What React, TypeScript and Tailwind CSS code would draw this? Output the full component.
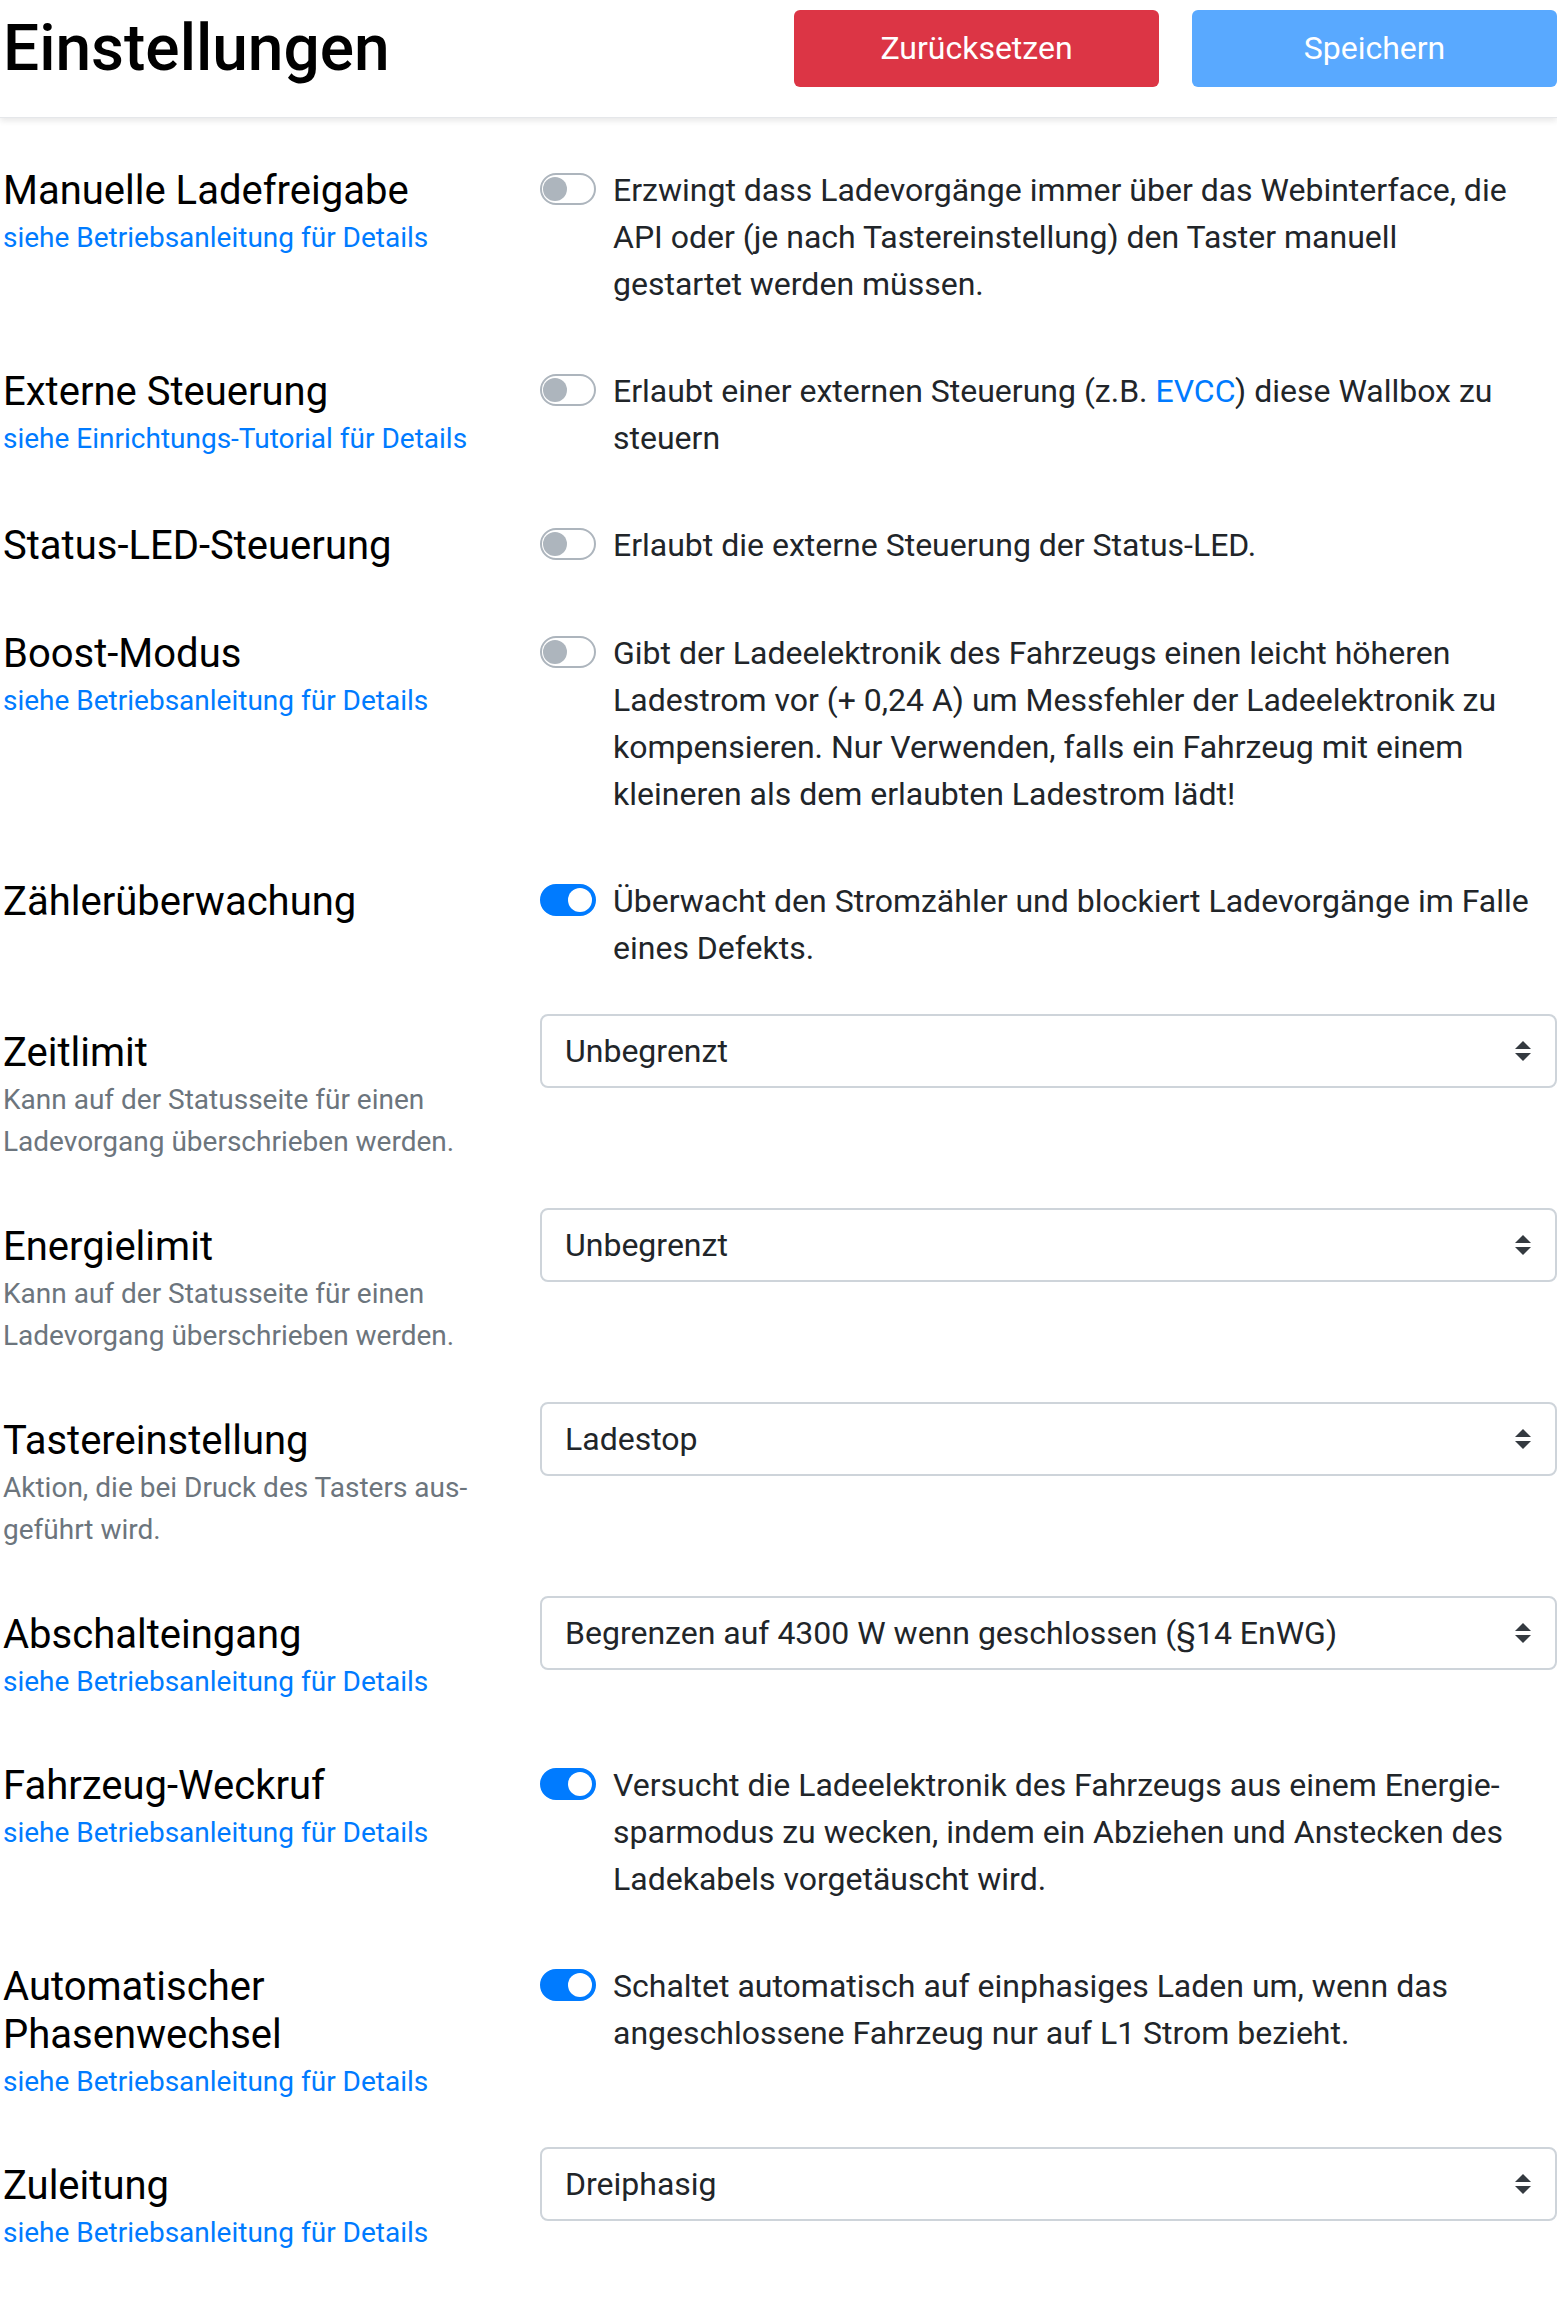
import React from "react";

const SHY = "\u00AD";

type Row =
  | {
      kind: "toggle";
      label: string[];
      link?: string;
      on: boolean;
      text: React.ReactNode;
    }
  | {
      kind: "select";
      label: string[];
      link?: string;
      desc?: string;
      value: string;
      pull?: boolean;
    };

const MANUAL = "siehe Betriebsanleitung für Details";

const rows: Row[] = [
  {
    kind: "toggle",
    label: ["Manuelle Ladefreigabe"],
    link: MANUAL,
    on: false,
    text: "Erzwingt dass Ladevorgänge immer über das Webinterface, die API oder (je nach Tastereinstellung) den Taster manuell gestartet werden müssen.",
  },
  {
    kind: "toggle",
    label: ["Externe Steuerung"],
    link: "siehe Einrichtungs-Tutorial für Details",
    on: false,
    text: (
      <>
        Erlaubt einer externen Steuerung (z.B.{" "}
        <a className="text-[#007bff]">EVCC</a>) diese Wallbox zu steuern
      </>
    ),
  },
  {
    kind: "toggle",
    label: ["Status-LED-Steuerung"],
    on: false,
    text: "Erlaubt die externe Steuerung der Status-LED.",
  },
  {
    kind: "toggle",
    label: ["Boost-Modus"],
    link: MANUAL,
    on: false,
    text: "Gibt der Ladeelektronik des Fahrzeugs einen leicht höheren Ladestrom vor (+ 0,24 A) um Messfehler der Ladeelektronik zu kompensieren. Nur Verwenden, falls ein Fahrzeug mit einem kleineren als dem erlaubten Ladestrom lädt!",
  },
  {
    kind: "toggle",
    label: ["Zählerüberwachung"],
    on: true,
    text: "Überwacht den Stromzähler und blockiert Ladevorgänge im Falle eines Defekts.",
  },
  {
    kind: "select",
    label: ["Zeitlimit"],
    desc: "Kann auf der Statusseite für einen Ladevorgang überschrieben werden.",
    value: "Unbegrenzt",
    pull: true,
  },
  {
    kind: "select",
    label: ["Energielimit"],
    desc: "Kann auf der Statusseite für einen Ladevorgang überschrieben werden.",
    value: "Unbegrenzt",
  },
  {
    kind: "select",
    label: ["Tastereinstellung"],
    desc: `Aktion, die bei Druck des Tasters aus${SHY}geführt wird.`,
    value: "Ladestop",
  },
  {
    kind: "select",
    label: ["Abschalteingang"],
    link: MANUAL,
    value: "Begrenzen auf 4300 W wenn geschlossen (§14 EnWG)",
  },
  {
    kind: "toggle",
    label: ["Fahrzeug-Weckruf"],
    link: MANUAL,
    on: true,
    text: `Versucht die Ladeelektronik des Fahrzeugs aus einem Energie${SHY}sparmodus zu wecken, indem ein Abziehen und Anstecken des Ladekabels vorgetäuscht wird.`,
  },
  {
    kind: "toggle",
    label: ["Automatischer", "Phasenwechsel"],
    link: MANUAL,
    on: true,
    text: "Schaltet automatisch auf einphasiges Laden um, wenn das angeschlossene Fahrzeug nur auf L1 Strom bezieht.",
  },
  {
    kind: "select",
    label: ["Zuleitung"],
    link: MANUAL,
    value: "Dreiphasig",
  },
];

function Switch({ on }: { on: boolean }) {
  return (
    <span
      className={
        on
          ? "mt-[6px] flex h-[32px] w-[56px] shrink-0 items-center justify-end rounded-full border-2 border-[#007bff] bg-[#007bff] pr-[2px]"
          : "mt-[6px] flex h-[32px] w-[56px] shrink-0 items-center justify-start rounded-full border-2 border-[#adb5bd] bg-white pl-[1px]"
      }
    >
      <span
        className={
          on
            ? "h-[24px] w-[24px] rounded-full bg-white"
            : "h-[24px] w-[24px] rounded-full bg-[#adb5bd]"
        }
      />
    </span>
  );
}

function SelectBox({ value }: { value: string }) {
  return (
    <div className="flex h-[74px] items-center justify-between rounded-[8px] border-2 border-[#ced4da] bg-white pl-[23px] pr-[24px]">
      <span>{value}</span>
      <svg width="16" height="20" viewBox="0 0 16 20" className="shrink-0">
        <path d="M8 0 L16 8 L0 8 Z" fill="#343a40" />
        <path d="M0 12 L16 12 L8 20 Z" fill="#343a40" />
      </svg>
    </div>
  );
}

export default function App() {
  return (
    <div className="min-h-screen bg-white font-['Roboto','Liberation_Sans',sans-serif] text-[32px] leading-[47px] text-[#212529]">
      <header className="flex h-[118px] items-center justify-between border-b border-[#e5e7ea] pb-[20px] pl-[3px] shadow-[0_3px_6px_rgba(0,0,0,0.09)]">
        <h1 className="text-[64px] font-medium leading-none text-black">
          Einstellungen
        </h1>
        <div className="flex gap-[33px]">
          <button className="h-[77px] w-[365px] rounded-[6px] bg-[#dc3545] text-white">
            Zurücksetzen
          </button>
          <button className="h-[77px] w-[365px] rounded-[6px] bg-[#59a9ff] text-white">
            Speichern
          </button>
        </div>
      </header>

      <main className="flex flex-col gap-[45px] pt-[34px] pb-[40px]">
        {rows.map((row, i) => (
          <div
            key={i}
            className={
              row.kind === "select" && row.pull
                ? "-mt-[3px] grid grid-cols-[540px_1fr]"
                : "grid grid-cols-[540px_1fr]"
            }
          >
            <div className="pt-[15px] pr-[20px] pl-[3px]">
              <div className="text-[40px] leading-[48px] text-black">
                {row.label.map((l, j) => (
                  <div key={j}>{l}</div>
                ))}
              </div>
              {row.link && (
                <div className="mt-[3px] text-[28px] leading-[40px] text-[#007bff]">
                  {row.link}
                </div>
              )}
              {row.kind === "select" && row.desc && (
                <div className="mt-[2px] text-[28px] leading-[42px] text-[#6c757d]">
                  {row.desc}
                </div>
              )}
            </div>
            {row.kind === "toggle" ? (
              <div className="flex gap-[17px] pt-[15px] pr-[26px]">
                <Switch on={row.on} />
                <p>{row.text}</p>
              </div>
            ) : (
              <SelectBox value={row.value} />
            )}
          </div>
        ))}
      </main>
    </div>
  );
}
